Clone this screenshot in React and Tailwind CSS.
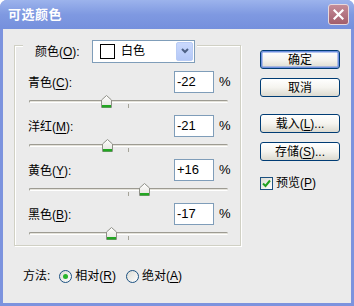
import React from "react";

const font = { fontFamily: '"Liberation Sans", "Noto Sans CJK SC", sans-serif' };

const rows = [
  { name: "青色", key: "C", value: -22 },
  { name: "洋红", key: "M", value: -21 },
  { name: "黄色", key: "Y", value: 16 },
  { name: "黑色", key: "B", value: -17 },
];

function Label({ name, k }) {
  return (
    <span className="text-[12px] text-black whitespace-nowrap">
      {name}(<span className="underline underline-offset-2">{k}</span>):
    </span>
  );
}

function Thumb() {
  return (
    <svg width="11" height="13" viewBox="0 0 11 13">
      <defs>
        <linearGradient id="tg" x1="0" y1="0" x2="0" y2="1">
          <stop offset="0" stopColor="#ffffff" />
          <stop offset="1" stopColor="#e3e2dc" />
        </linearGradient>
      </defs>
      <path d="M0.5 5 L5.5 0.5 L10.5 5 V12.5 H0.5 Z" fill="url(#tg)" stroke="#8f9088" />
      <rect x="1" y="10" width="9" height="2.5" fill="#22a622" />
    </svg>
  );
}

function Slider({ value }) {
  return (
    <div className="relative ml-[14px] w-[199px] h-[22px]">
      <div className="absolute left-0 right-0 top-[7px] h-[3px] rounded-full border-t border-l border-[#9d9b92] bg-[#e4e2da] border-b border-b-white" />
      <div className="absolute left-[99px] top-[11px] w-px h-[4px] bg-[#a5a398]" />
      <div className="absolute top-[2px]" style={{ left: 94 + value }}>
        <Thumb />
      </div>
    </div>
  );
}

function XpButton({ children, primary }) {
  return (
    <div
      className={`w-[80px] h-[19px] rounded-[3px] border border-[#003c74] flex items-center justify-center text-[12px] text-black bg-gradient-to-b from-white via-[#f5f4ef] to-[#dcdad0] ${
        primary ? "shadow-[inset_0_0_0_1.5px_#6f90e0]" : ""
      }`}
    >
      {children}
    </div>
  );
}

function Radio({ checked }) {
  return (
    <svg width="13" height="13" viewBox="0 0 13 13">
      <defs>
        <linearGradient id="rg" x1="0" y1="0" x2="1" y2="1">
          <stop offset="0" stopColor="#dcdcd4" />
          <stop offset="1" stopColor="#ffffff" />
        </linearGradient>
      </defs>
      <circle cx="6.5" cy="6.5" r="6" fill="url(#rg)" stroke="#1c5180" />
      {checked && <circle cx="6.5" cy="6.5" r="2.5" fill="#29b42a" />}
    </svg>
  );
}

export default function App() {
  return (
    <div style={font} className="w-[354px] h-[306px] rounded-t-[7px] bg-[#7c93de] flex flex-col px-[3px] pb-[3px]">
      {/* title bar */}
      <div className="h-[29px] -mx-[3px] px-[8px] rounded-t-[7px] bg-gradient-to-b from-[#9cb3ec] via-[#7f99e1] to-[#7590dd] flex items-center justify-between">
        <span className="text-[13px] font-bold text-white tracking-[0.5px]">可选颜色</span>
        <div className="w-[21px] h-[21px] mr-[-3px] rounded-[3px] border border-[#e8d8dc] bg-gradient-to-b from-[#c48c98] to-[#a25e6c] flex items-center justify-center">
          <svg width="11" height="11" viewBox="0 0 11 11">
            <path d="M1.5 1.5 L9.5 9.5 M9.5 1.5 L1.5 9.5" stroke="#ffffff" strokeWidth="2.2" strokeLinecap="square" />
          </svg>
        </div>
      </div>

      {/* body */}
      <div className="flex-1 bg-[#ebebeb] flex">
        <div className="pl-[11px] pt-[16px] w-[257px]">
          <div className="relative w-[227px] h-[201px] border border-[#d0d0c4] shadow-[inset_1px_1px_0_#ffffff,1px_1px_0_#ffffff] pt-[25px]">
            {/* legend */}
            <div className="absolute left-[8px] top-[-7px] pl-[12px] pr-[2px] bg-[#ebebeb] flex items-center">
              <span className="w-[57px]">
                <Label name="颜色" k="O" />
              </span>
              <div className="w-[103px] h-[23px] border border-[#7f9db9] bg-white flex items-center pl-[7px] pr-[1px]">
                <div className="w-[15px] h-[15px] border border-black bg-white" />
                <span className="ml-[6px] text-[12px] text-black flex-1">白色</span>
                <div className="w-[17px] h-[19px] rounded-[2px] bg-gradient-to-b from-[#cad9fd] to-[#b4c8f7] border border-[#b9ccf5] flex items-center justify-center">
                  <svg width="8" height="6" viewBox="0 0 8 6">
                    <path d="M1 1 L4 4 L7 1" fill="none" stroke="#4d6185" strokeWidth="2" />
                  </svg>
                </div>
              </div>
            </div>

            {rows.map((r) => (
              <div key={r.key}>
                <div className="flex items-center h-[22px] pl-[13px]">
                  <span className="w-[146px]">
                    <Label name={r.name} k={r.key} />
                  </span>
                  <div className="w-[40px] h-[22px] border border-[#7f9db9] bg-white flex items-center pl-[2px] text-[13px] text-black">
                    {r.value > 0 ? `+${r.value}` : r.value}
                  </div>
                  <span className="ml-[5px] text-[13px] text-black">%</span>
                </div>
                <Slider value={r.value} />
              </div>
            ))}
          </div>

          <div className="mt-[22px] ml-[9px] h-[16px] flex items-center text-[12px] text-black">
            <span>方法:</span>
            <span className="ml-[9px] flex items-center">
              <Radio checked />
            </span>
            <span className="ml-[3px]">
              相对(<span className="underline underline-offset-2">R</span>)
            </span>
            <span className="ml-[10px] flex items-center">
              <Radio />
            </span>
            <span className="ml-[3px]">
              绝对(<span className="underline underline-offset-2">A</span>)
            </span>
          </div>
        </div>

        <div className="pt-[21px] flex flex-col">
          <XpButton primary>确定</XpButton>
          <div className="mt-[9px]">
            <XpButton>取消</XpButton>
          </div>
          <div className="mt-[17px]">
            <XpButton>
              载入(<span className="underline underline-offset-2">L</span>)...
            </XpButton>
          </div>
          <div className="mt-[9px]">
            <XpButton>
              存储(<span className="underline underline-offset-2">S</span>)...
            </XpButton>
          </div>
          <div className="mt-[13px] flex items-center text-[12px] text-black">
            <div className="w-[13px] h-[13px] border border-[#1c5180] bg-gradient-to-br from-[#dcdcd4] to-white flex items-center justify-center">
              <svg width="9" height="9" viewBox="0 0 9 9">
                <path d="M1 4.5 L3.5 7 L8 1.5" fill="none" stroke="#21a121" strokeWidth="2" />
              </svg>
            </div>
            <span className="ml-[3px]">
              预览(<span className="underline underline-offset-2">P</span>)
            </span>
          </div>
        </div>
      </div>
    </div>
  );
}
